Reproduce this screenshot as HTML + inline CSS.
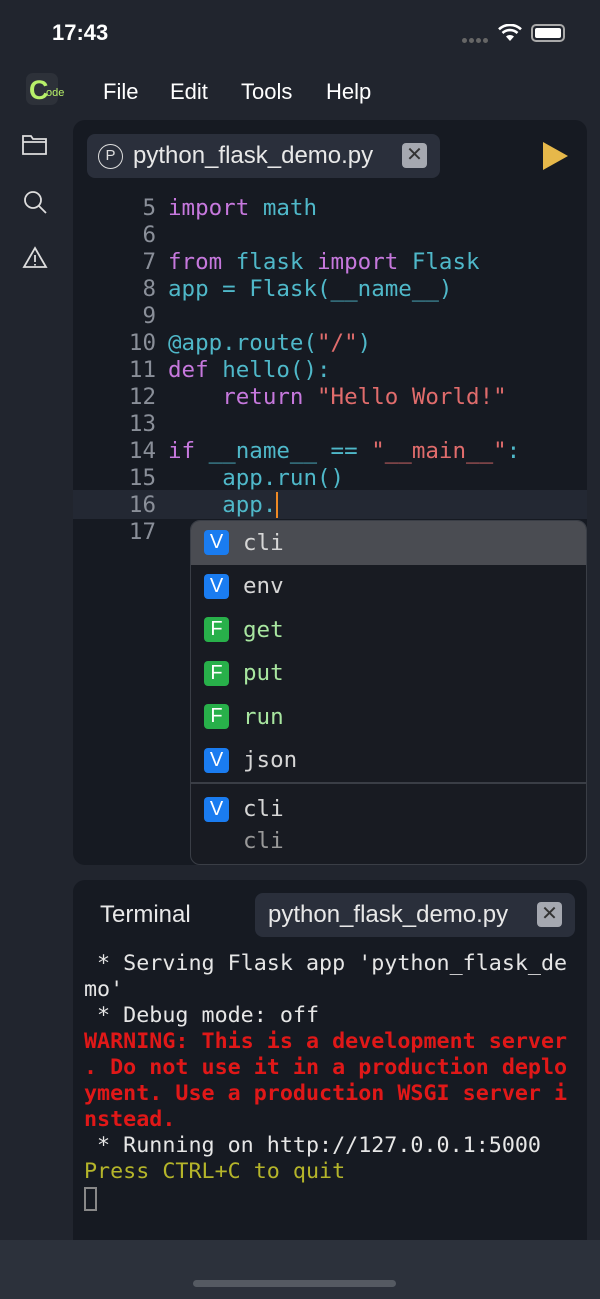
<!DOCTYPE html>
<html><head><meta charset="utf-8"><style>
*{margin:0;padding:0;box-sizing:border-box}
body{width:600px;height:1299px;background:#21252e;position:relative;overflow:hidden;font-family:"Liberation Sans",sans-serif;color:#fff}
.a{position:absolute}
.mono{font-family:"DejaVu Sans Mono","Liberation Mono",monospace}
.code{left:73px;top:195px;width:514px;font-size:22.5px;line-height:27px;white-space:pre}
.ln{display:inline-block;width:83px;text-align:right;color:#8a8f99;margin-right:12px}
.k{color:#c678dd}.c{color:#4fb8c9}.s{color:#e06c6c}.w{color:#d6d6d6}
.row{height:43.5px;display:flex;align-items:center;font-size:22.5px}
.bd{width:25px;height:25px;border-radius:4px;margin:0 14px 0 13px;color:#fff;font-family:"Liberation Sans",sans-serif;font-size:20px;display:flex;align-items:center;justify-content:center}
.V{background:#1a7cf0}.F{background:#28b04a}
.term{left:84px;top:951px;font-size:21.7px;line-height:26px;white-space:pre;color:#e6e6e6}
</style></head><body>
<div class="a" style="left:52px;top:20px;font-size:22px;font-weight:bold">17:43</div>
<div class="a" style="left:462px;top:30px;width:32px;height:6px">
<span style="display:inline-block;width:5px;height:5px;border-radius:50%;background:#666;margin-right:2px"></span><span style="display:inline-block;width:5px;height:5px;border-radius:50%;background:#666;margin-right:2px"></span><span style="display:inline-block;width:5px;height:5px;border-radius:50%;background:#666;margin-right:2px"></span><span style="display:inline-block;width:5px;height:5px;border-radius:50%;background:#666"></span></div>
<svg class="a" style="left:498px;top:24px" width="24" height="18" viewBox="0 0 24 18"><path d="M12 17l4-4.5a6 6 0 0 0-8 0z" fill="#fff"/><path d="M4.5 9a11 11 0 0 1 15 0" stroke="#fff" stroke-width="2.6" fill="none"/><path d="M1 5.3a16 16 0 0 1 22 0" stroke="#fff" stroke-width="2.6" fill="none"/></svg>
<div class="a" style="left:531px;top:24px;width:34px;height:18px;border:2px solid #aaa;border-radius:5px;padding:2px"><div style="width:100%;height:100%;background:#fff;border-radius:2px"></div></div>
<div class="a" style="left:26px;top:73px;width:32px;height:32px;border-radius:7px;background:#2d3139"></div>
<div class="a" style="left:29px;top:75px;font-size:27px;font-weight:bold;color:#b7f06a">C</div>
<div class="a" style="left:46px;top:87px;font-size:11px;color:#b7f06a">ode</div>
<div class="a" style="left:103px;top:79px;font-size:22px">File</div>
<div class="a" style="left:170px;top:79px;font-size:22px">Edit</div>
<div class="a" style="left:241px;top:79px;font-size:22px">Tools</div>
<div class="a" style="left:326px;top:79px;font-size:22px">Help</div>
<svg class="a" style="left:20px;top:132px" width="30" height="140" viewBox="0 0 30 140" fill="none" stroke="#ddd" stroke-width="1.8">
<path d="M3 4h8l2 3h13v15H3z M3 10h23"/>
<circle cx="13" cy="68" r="8"/><path d="M19 74l7 7"/>
<path d="M15 116l11 19H4z M15 123v7 M15 132v1.5"/></svg>
<div class="a" style="left:73px;top:120px;width:514px;height:745px;background:#161a22;border-radius:12px"></div>
<div class="a" style="left:87px;top:134px;width:353px;height:44px;background:#2a2f3b;border-radius:8px"></div>
<div class="a" style="left:98px;top:144px;width:25px;height:25px;border:1.8px solid #ddd;border-radius:50%;font-size:15px;text-align:center;line-height:22px;color:#ddd">P</div>
<div class="a" style="left:133px;top:142px;font-size:24px;color:#e8e8e8">python_flask_demo.py</div>
<div class="a" style="left:402px;top:143px;width:25px;height:25px;background:#a5a8b0;border-radius:4px;color:#333;font-size:20px;text-align:center;line-height:25px">✕</div>
<svg class="a" style="left:541px;top:141px" width="28" height="30"><path d="M2 1l25 14L2 29z" fill="#e6b84a"/></svg>
<div class="a" style="left:73px;top:490px;width:514px;height:29px;background:#232833"></div>
<div class="a mono code"><span class="ln">5</span><span class="k">import</span> <span class="c">math</span>
<span class="ln">6</span>
<span class="ln">7</span><span class="k">from</span> <span class="c">flask</span> <span class="k">import</span> <span class="c">Flask</span>
<span class="ln">8</span><span class="c">app = Flask(__name__)</span>
<span class="ln">9</span>
<span class="ln">10</span><span class="c">@app.route(</span><span class="s">"/"</span><span class="c">)</span>
<span class="ln">11</span><span class="k">def</span> <span class="c">hello():</span>
<span class="ln">12</span>    <span class="k">return</span> <span class="s">"Hello World!"</span>
<span class="ln">13</span>
<span class="ln">14</span><span class="k">if</span> <span class="c">__name__ == </span><span class="s">"__main__"</span><span class="c">:</span>
<span class="ln">15</span>    <span class="c">app.run()</span>
<span class="ln">16</span>    <span class="c">app.</span><span style="border-left:2px solid #f08a24"></span>
<span class="ln">17</span></div>
<div class="a mono" style="left:190px;top:520px;width:397px;height:345px;background:#181b22;border:1px solid #3a3e46;border-radius:10px;overflow:hidden">
<div class="row" style="background:#4a4c52"><span class="bd V">V</span><span class="w">cli</span></div>
<div class="row"><span class="bd V">V</span><span class="w">env</span></div>
<div class="row"><span class="bd F">F</span><span style="color:#a8e6a0">get</span></div>
<div class="row"><span class="bd F">F</span><span style="color:#a8e6a0">put</span></div>
<div class="row"><span class="bd F">F</span><span style="color:#a8e6a0">run</span></div>
<div class="row"><span class="bd V">V</span><span class="w">json</span></div>
<div style="height:2px;background:#3a3e46;margin-top:0px"></div>
<div class="row" style="height:38px;margin-top:6px"><span class="bd V">V</span><span class="w">cli</span></div>
<div style="padding-left:52px;font-size:22.5px;color:#999">cli</div>
</div>
<div class="a" style="left:73px;top:880px;width:514px;height:370px;background:#161a22;border-radius:12px 12px 0 0"></div>
<div class="a" style="left:100px;top:901px;font-size:24px;color:#e8e8e8">Terminal</div>
<div class="a" style="left:255px;top:893px;width:320px;height:44px;background:#2a2f3b;border-radius:8px"></div>
<div class="a" style="left:268px;top:901px;font-size:24px;color:#e8e8e8">python_flask_demo.py</div>
<div class="a" style="left:537px;top:902px;width:25px;height:25px;background:#a5a8b0;border-radius:4px;color:#333;font-size:20px;text-align:center;line-height:25px">✕</div>
<div class="a mono term"> * Serving Flask app 'python_flask_de
mo'
 * Debug mode: off
<b style="color:#e01818">WARNING: This is a development server
. Do not use it in a production deplo
yment. Use a production WSGI server i
nstead.</b>
 * Running on http://127.0.0.1:5000
<span style="color:#b5b52a">Press CTRL+C to quit</span></div>
<div class="a" style="left:84px;top:1187px;width:13px;height:24px;border:2px solid #888"></div>
<div class="a" style="left:0;top:1240px;width:600px;height:59px;background:#2c313b"></div>
<div class="a" style="left:193px;top:1280px;width:203px;height:7px;border-radius:4px;background:#555a62"></div>
</body></html>
